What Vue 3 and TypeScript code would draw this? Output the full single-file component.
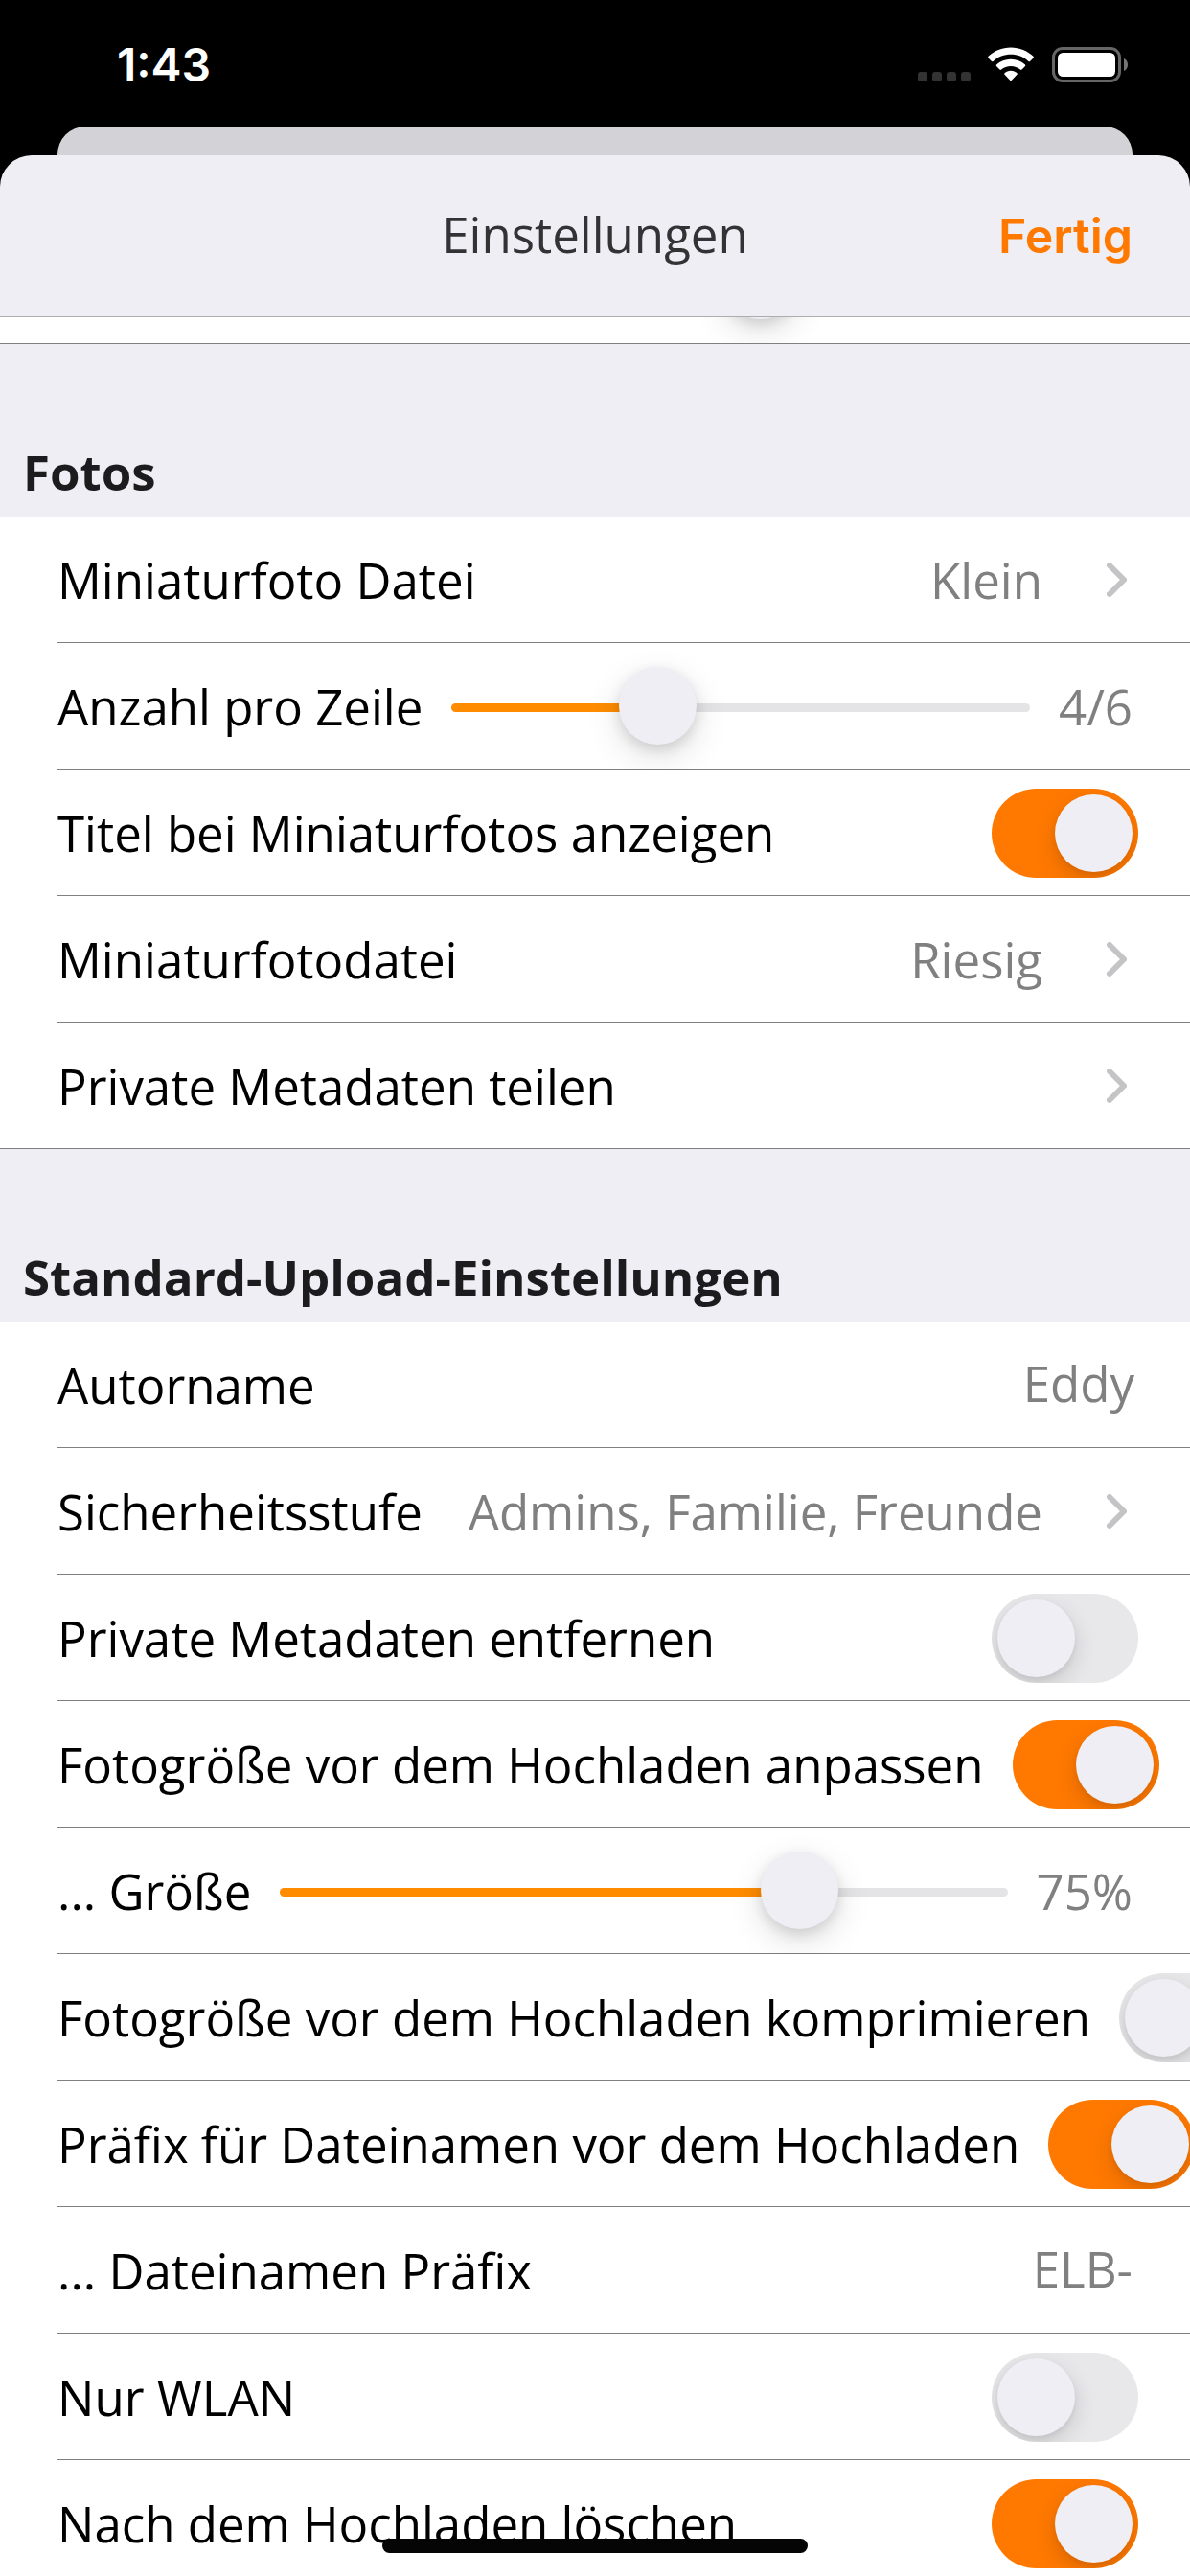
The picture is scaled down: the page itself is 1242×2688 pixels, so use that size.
<script setup lang="ts">
interface Row {
  label: string
  kind: 'link' | 'range' | 'toggle' | 'input'
  value?: string
  position?: number
  on?: boolean
}

interface Section {
  title: string
  rows: Row[]
}

const sections: Section[] = [
  {
    title: 'Fotos',
    rows: [
      { label: 'Miniaturfoto Datei', kind: 'link', value: 'Klein' },
      { label: 'Anzahl pro Zeile', kind: 'range', value: '4/6', position: 1 / 3 },
      { label: 'Titel bei Miniaturfotos anzeigen', kind: 'toggle', on: true },
      { label: 'Miniaturfotodatei', kind: 'link', value: 'Riesig' },
      { label: 'Private Metadaten teilen', kind: 'link' },
    ],
  },
  {
    title: 'Standard-Upload-Einstellungen',
    rows: [
      { label: 'Autorname', kind: 'input', value: 'Eddy' },
      { label: 'Sicherheitsstufe', kind: 'link', value: 'Admins, Familie, Freunde' },
      { label: 'Private Metadaten entfernen', kind: 'toggle', on: false },
      { label: 'Fotogröße vor dem Hochladen anpassen', kind: 'toggle', on: true },
      { label: '... Größe', kind: 'range', value: '75%', position: 0.74 },
      { label: 'Fotogröße vor dem Hochladen komprimieren', kind: 'toggle', on: false },
      { label: 'Präfix für Dateinamen vor dem Hochladen', kind: 'toggle', on: true },
      { label: '... Dateinamen Präfix', kind: 'input', value: 'ELB-' },
      { label: 'Nur WLAN', kind: 'toggle', on: false },
      { label: 'Nach dem Hochladen löschen', kind: 'toggle', on: true },
    ],
  },
]

// The knob travels over the track width minus its own 81px.
const knobLeft = (p: number) => ({ left: `calc((100% - 81px) * ${p})` })
const fillWidth = (p: number) => ({ width: `calc((100% - 81px) * ${p} + 40px)` })
</script>

<template>
  <div class="screen">
    <header class="status">
      <span class="time">1:43</span>
      <div class="indicators">
        <div class="dots"><i v-for="n in 4" :key="n"></i></div>
        <svg class="wifi" width="48" height="37" viewBox="0 0 48 37" fill="#fff">
          <path d="M24 0.5C33 .5 41.500 4 47.500 9.800Q48.200 10.600 47.500 11.400L44 14.900Q43.200 15.600 42.400 14.900C37.400 10.300 31 7.800 24 7.800S10.600 10.300 5.600 14.900Q4.800 15.600 4 14.900L.5 11.400Q-.2 10.600.5 9.800C6.500 4 15 .5 24 .5Z" />
          <path d="M24 12.700C29.700 12.700 35 14.800 39 18.500Q39.700 19.300 39 20.100L35.500 23.600Q34.700 24.300 33.900 23.600C31.200 21.200 27.700 19.900 24 19.900S16.800 21.200 14.100 23.600Q13.300 24.300 12.500 23.600L9 20.100Q8.300 19.300 9 18.500C13 14.800 18.300 12.700 24 12.700Z" />
          <path d="M24 24.700C26.500 24.700 28.800 25.600 30.500 27.200Q31.200 28 30.500 28.800L24.800 34.700Q24 35.400 23.200 34.700L17.500 28.800Q16.800 28 17.500 27.200C19.200 25.600 21.500 24.700 24 24.700Z" />
        </svg>
        <svg class="battery" width="80" height="37" viewBox="0 0 80 37">
          <rect x="1.500" y="1.500" width="69" height="34" rx="9.500" fill="none" stroke="#666" stroke-width="3" />
          <rect x="6" y="6" width="60" height="25" rx="5.500" fill="#fff" />
          <path d="M75 12C77.600 13 79 15.500 79 18.500S77.600 24 75 25Z" fill="#757575" />
        </svg>
      </div>
    </header>
    <div class="back-card"></div>
    <main class="sheet">
      <nav class="navbar">
        <span></span>
        <h1>Einstellungen</h1>
        <button type="button">Fertig</button>
      </nav>
      <div class="peek">
        <div class="peek-row"><span class="knob peek-knob"></span></div>
      </div>
      <section v-for="section in sections" :key="section.title">
        <h2>{{ section.title }}</h2>
        <div class="list">
          <div v-for="row in section.rows" :key="row.label" class="row" :class="row.kind">
            <span class="label">{{ row.label }}</span>
            <div v-if="row.kind === 'range'" class="track">
              <span class="fill" :style="fillWidth(row.position ?? 0)"></span>
              <span class="knob" :style="knobLeft(row.position ?? 0)"></span>
            </div>
            <span v-if="row.value" class="value">{{ row.value }}</span>
            <svg v-if="row.kind === 'link'" class="chevron" width="21" height="36" viewBox="0 0 21 36">
              <path d="M3 3L18 18L3 33" fill="none" stroke="#c4c4c6" stroke-width="6" stroke-linecap="round" stroke-linejoin="round" />
            </svg>
            <span v-if="row.kind === 'toggle'" class="switch" :class="{ on: row.on }"><i></i></span>
          </div>
        </div>
      </section>
    </main>
    <div class="home"></div>
  </div>
</template>

<style>
body {
  margin: 0;
  background: #000;
}
</style>

<style scoped>
.screen {
  position: relative;
  display: flex;
  flex-direction: column;
  width: 1242px;
  height: 2688px;
  overflow: hidden;
  background: #000;
  font-family: 'Open Sans', 'Noto Sans', sans-serif;
  font-size: 51px;
  line-height: 70px;
}
.status {
  flex: none;
  display: flex;
  justify-content: space-between;
  height: 132px;
  box-sizing: border-box;
  padding: 0 64px 0 122px;
  color: #fff;
}
.time {
  margin-top: 33px;
  font: 600 48px/70px Inter, 'Liberation Sans', sans-serif;
}
.indicators {
  display: flex;
  align-items: flex-start;
  padding-top: 49px;
}
.dots {
  display: flex;
  gap: 5px;
  margin: 26px 18px 0 0;
}
.dots i {
  width: 10px;
  height: 10px;
  border-radius: 3px;
  background: #333;
}
.wifi {
  margin-right: 19px;
}
.back-card {
  flex: none;
  height: 30px;
  margin: 0 60px;
  border-radius: 29px 29px 0 0;
  background: #d3d2d7;
}
.sheet {
  flex: 1;
  min-height: 0;
  overflow: hidden;
  border-radius: 33px 33px 0 0;
  background: #efeef4;
}
.navbar {
  display: grid;
  grid-template-columns: 1fr auto 1fr;
  align-items: center;
  height: 168px;
  border-bottom: 1px solid #adadb0;
}
h1 {
  margin: 0 0 4px;
  font-size: 51px;
  font-weight: 400;
  color: #333335;
}
button {
  justify-self: end;
  margin: 0 60px 0 0;
  padding: 0;
  border: 0;
  background: none;
  color: #ff7900;
  font: 600 50px/70px Inter, 'Liberation Sans', sans-serif;
}
.peek {
  display: flex;
  flex-direction: column;
  justify-content: flex-end;
  height: 27px;
  overflow: hidden;
  border-bottom: 1px solid #808080;
  background: #fff;
}
.peek-row {
  position: relative;
  flex: none;
  height: 131px;
}
h2 {
  height: 180px;
  margin: 0;
  padding: 98px 24px 0;
  box-sizing: border-box;
  font-size: 51px;
  font-weight: 700;
  color: #1c1c1e;
}
.list {
  padding-top: 1px;
  background: #fff;
  box-shadow: inset 0 1px #808080, inset 0 -1px #808080;
}
.row {
  display: flex;
  align-items: center;
  height: 132px;
  margin-left: 60px;
  padding-right: 60px;
  box-sizing: border-box;
  overflow: hidden;
  box-shadow: inset 0 -1px #808080;
  white-space: nowrap;
  color: #000;
}
.row:first-child {
  height: 131px;
  padding-bottom: 1px;
}
.row:last-child {
  box-shadow: none;
}
.row.link {
  padding-right: 66px;
}
.row.toggle {
  padding-right: 54px;
}
.label {
  flex: none;
}
.value {
  flex: none;
  margin-left: auto;
  color: #808080;
}
.input .value {
  margin-top: -4px;
}
.input:first-child .value {
  margin-right: -2px;
}
.chevron {
  flex: none;
  margin-left: auto;
}
.value + .chevron {
  margin-left: 67px;
}
.track {
  position: relative;
  flex: 1;
  height: 9px;
  margin: 3px 30px 0;
  border-radius: 4.5px;
  background: #e4e4e6;
}
.fill {
  display: block;
  height: 9px;
  border-radius: 4.5px;
  background: #ff8c00;
}
.knob {
  position: absolute;
  top: -38px;
  width: 81px;
  height: 81px;
  border-radius: 50%;
  background: #efeef4;
  box-shadow: 0 12px 36px rgba(0, 0, 0, 0.13), 0 5px 14px rgba(0, 0, 0, 0.12);
}
.knob.peek-knob {
  left: 753px;
  top: 25px;
}
.switch {
  flex: none;
  display: flex;
  width: 153px;
  height: 93px;
  margin: 1px 0 0 auto;
  padding: 6px;
  box-sizing: border-box;
  overflow: hidden;
  border-radius: 47px;
  background: #e8e8ea;
}
.switch i {
  width: 81px;
  height: 81px;
  border-radius: 50%;
  background: #efeef4;
  box-shadow: 0 9px 24px rgba(0, 0, 0, 0.14), 0 3px 6px rgba(0, 0, 0, 0.06);
}
.switch.on {
  justify-content: flex-end;
  background: #ff7900;
}
.toggle .label {
  padding-right: 30px;
}
.home {
  position: absolute;
  left: 399px;
  bottom: 24px;
  width: 444px;
  height: 15px;
  border-radius: 8px;
  background: #050505;
}
</style>
